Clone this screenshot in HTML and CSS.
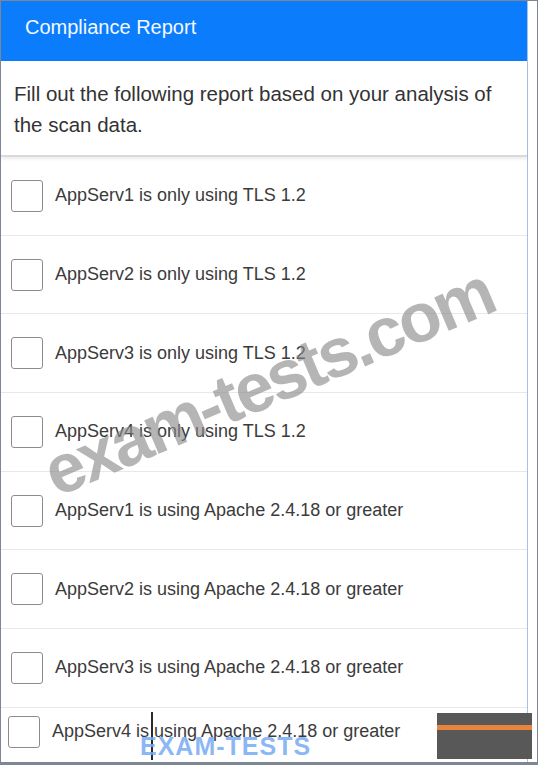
FILE: index.html
```html
<!DOCTYPE html>
<html lang="en">
<head>
    <meta charset="UTF-8">
    <meta name="viewport" content="width=device-width, initial-scale=1.0">
    <title>Compliance Report</title>
    <link rel="stylesheet" href="styles.css">
</head>
<body>

<div class="frame">
    <div class="panel">
        <header class="panel-head">Compliance Report</header>
        <p class="intro">Fill out the following report based on your analysis of the scan data.</p>

        <ul class="checklist">
            <li class="check-row"><span class="box"></span><span class="label">AppServ1 is only using TLS 1.2</span></li>
            <li class="check-row"><span class="box"></span><span class="label">AppServ2 is only using TLS 1.2</span></li>
            <li class="check-row"><span class="box"></span><span class="label">AppServ3 is only using TLS 1.2</span></li>
            <li class="check-row"><span class="box"></span><span class="label">AppServ4 is only using TLS 1.2</span></li>
            <li class="check-row"><span class="box"></span><span class="label">AppServ1 is using Apache 2.4.18 or greater</span></li>
            <li class="check-row"><span class="box"></span><span class="label">AppServ2 is using Apache 2.4.18 or greater</span></li>
            <li class="check-row"><span class="box"></span><span class="label">AppServ3 is using Apache 2.4.18 or greater</span></li>
            <li class="check-row last"><span class="box"></span><span class="label">AppServ4 is using Apache 2.4.18 or greater</span></li>
        </ul>
    </div>

    <!-- overlays from the captured frame -->
    <div class="watermark">exam-tests.com</div>
    <div class="caret"></div>
    <div class="brand">EXAM-TESTS</div>
    <div class="player-bar"><span class="progress"></span></div>
</div>

</body>
</html>
```

FILE: styles.css
```css
body {
    margin: 0;
    padding: 0;
    background-color: #ffffff;
    font-family: "Liberation Sans", Arial, sans-serif;
}
.frame {
    position: relative;
    width: 538px;
    height: 765px;
    box-sizing: border-box;
    border: 1px solid #7d8793;
    border-bottom-width: 3px;
    padding-right: 9px;
    display: flex;
    overflow: hidden;
    background-color: white;
}
.panel {
    flex: 1;
    display: flex;
    flex-direction: column;
    border-right: 1px solid #a9c1ea;
}
.panel-head {
    height: 60px;
    box-sizing: border-box;
    padding: 14px 24px 0;
    background-color: #0b7dfc;
    color: #f4f8ff;
    font-size: 20px;
    line-height: 24px;
}
.intro {
    margin: 0;
    padding: 17px 10px 15px 13px;
    font-size: 20.5px;
    line-height: 31px;
    color: #333;
    border-bottom: 2px solid #dadada;
    box-shadow: 0 2px 3px rgba(0, 0, 0, 0.08);
}
.checklist {
    list-style: none;
    margin: 0;
    padding: 0;
    flex: 1;
    display: flex;
    flex-direction: column;
}
.check-row {
    display: flex;
    align-items: center;
    gap: 12px;
    height: 78.7px;
    box-sizing: border-box;
    padding-left: 10px;
    border-bottom: 1px solid #e8e8e8;
}
.check-row.last {
    flex: 1;
    height: auto;
    border-bottom: none;
    padding-left: 7px;
    padding-bottom: 6px;
}
.box {
    flex: none;
    width: 32px;
    height: 32px;
    box-sizing: border-box;
    border: 1.5px solid #8c8c8c;
    border-radius: 3px;
    background-color: white;
}
.label {
    font-size: 18px;
    color: #3b3b3b;
}
.watermark {
    position: absolute;
    left: 267px;
    top: 381px;
    transform: translate(-50%, -50%) rotate(-23deg);
    font-size: 69px;
    font-weight: bold;
    letter-spacing: -3px;
    line-height: 1;
    white-space: nowrap;
    color: rgba(135, 135, 135, 0.62);
}
.caret {
    position: absolute;
    left: 150px;
    top: 711px;
    width: 2px;
    height: 48px;
    background-color: #2a2a2a;
}
.brand {
    position: absolute;
    left: 139px;
    top: 733px;
    font-size: 25px;
    font-weight: bold;
    line-height: 24px;
    letter-spacing: 1px;
    color: rgba(118, 170, 242, 0.85);
}
.player-bar {
    position: absolute;
    left: 436px;
    top: 712px;
    width: 95px;
    height: 46px;
    box-sizing: border-box;
    padding-top: 12px;
    background-color: #585858;
}
.progress {
    display: block;
    height: 5px;
    background-color: #e8843e;
}
```
